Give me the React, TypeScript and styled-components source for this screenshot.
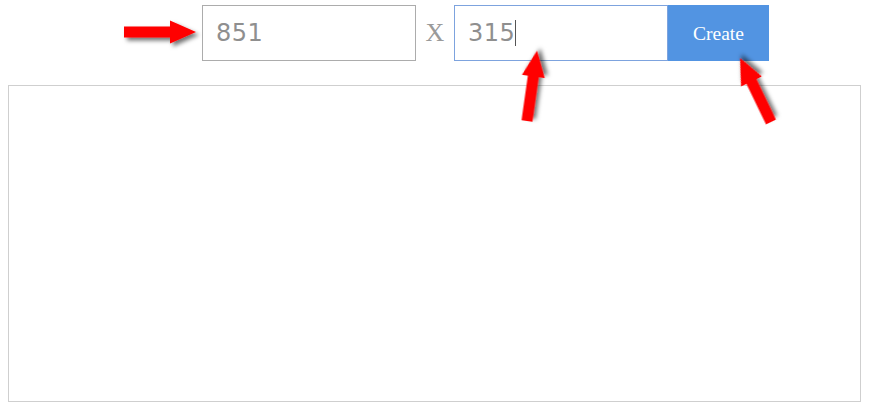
import React from 'react';
import styled, { createGlobalStyle } from 'styled-components';

const GlobalStyle = createGlobalStyle`
	html, body {
		margin: 0;
		padding: 0;
		background: #fff;
	}
`;

const Page = styled.div`
	position: relative;
	width: 873px;
	height: 411px;
	overflow: hidden;
`;

const Toolbar = styled.div`
	display: flex;
	align-items: stretch;
	padding-top: 5px;
	padding-left: 202px;
	height: 56px;
`;

const Field = styled.div<{ focused?: boolean }>`
	box-sizing: border-box;
	display: flex;
	align-items: center;
	width: 214px;
	height: 56px;
	padding-left: 13px;
	border: 1px solid ${({ focused }) => (focused ? '#7da3de' : '#acacac')};
	background: #fff;
	font-family: 'DejaVu Sans', sans-serif;
	font-size: 24px;
	letter-spacing: 0.5px;
	color: #8f8f8f;
`;

const Caret = styled.span`
	display: inline-block;
	width: 1px;
	height: 26px;
	margin-left: 0;
	background: #555;
`;

const Times = styled.span`
	display: flex;
	align-items: center;
	justify-content: center;
	width: 38px;
	font-family: 'Liberation Serif', serif;
	font-size: 26px;
	color: #9a9a9a;
`;

const CreateButton = styled.button`
	width: 101px;
	height: 56px;
	border: 0;
	padding: 2px 0 0;
	background: #5294e2;
	color: #fff;
	font-family: 'Liberation Serif', serif;
	font-size: 19.5px;
	cursor: pointer;
`;

const Canvas = styled.div`
	box-sizing: border-box;
	width: 853px;
	height: 317px;
	margin: 24px 0 0 8px;
	border: 1px solid #cfcfcf;
	background: #fff;
`;

const Overlay = styled.svg`
	position: absolute;
	inset: 0;
	pointer-events: none;
`;

interface ArrowProps {
	x: number;
	y: number;
	length: number;
	angle: number;
}

const Arrow: React.FC<ArrowProps> = ({ x, y, length, angle }) => {
	const h = length - 26;
	const points = `0,-5.5 ${h},-5.5 ${h},-11.5 ${length},0 ${h},11.5 ${h},5.5 0,5.5`;
	return (
		<polygon
			points={points}
			fill='#ff0000'
			filter='url(#arrowShadow)'
			transform={`translate(${x} ${y}) rotate(${angle})`}
		/>
	);
};

const App: React.FC = () => {
	return (
		<Page>
			<GlobalStyle />
			<Toolbar>
				<Field>851</Field>
				<Times>X</Times>
				<Field focused>
					315
					<Caret />
				</Field>
				<CreateButton>Create</CreateButton>
			</Toolbar>
			<Canvas />
			<Overlay width='873' height='411' viewBox='0 0 873 411'>
				<defs>
					<filter id='arrowShadow' x='-30%' y='-30%' width='160%' height='160%'>
						<feDropShadow dx='3' dy='3' stdDeviation='2' floodColor='#000' floodOpacity='0.55' />
					</filter>
				</defs>
				<Arrow x={124} y={32} length={72} angle={0} />
				<Arrow x={527} y={121} length={71} angle={-81.9} />
				<Arrow x={771} y={122} length={71} angle={-115.8} />
			</Overlay>
		</Page>
	);
};

export default App;
